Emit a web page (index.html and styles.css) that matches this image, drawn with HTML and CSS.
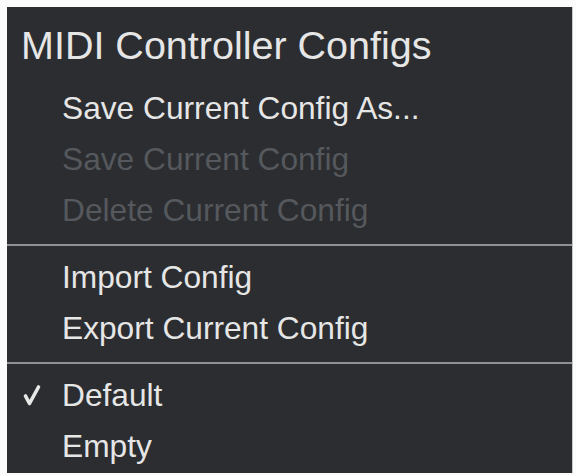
FILE: index.html
```html
<!DOCTYPE html>
<html>
<head>
<meta charset="utf-8">
<link rel="stylesheet" href="styles.css">
</head>
<body>
<div class="menu">
  <div class="title">MIDI Controller Configs</div>
  <div class="item">Save Current Config As...</div>
  <div class="item disabled">Save Current Config</div>
  <div class="item disabled">Delete Current Config</div>
  <div class="sep"></div>
  <div class="item">Import Config</div>
  <div class="item">Export Current Config</div>
  <div class="sep"></div>
  <div class="item checked"><svg class="check" width="18" height="22" viewBox="0 0 18 22"><path d="M2.5 12 L6.5 19.5 L15.5 3" fill="none" stroke="#e8e8e8" stroke-width="3.6" stroke-linecap="round" stroke-linejoin="round"/></svg>Default</div>
  <div class="item">Empty</div>
</div>
</body>
</html>
```
FILE: styles.css
```css
html, body {
  margin: 0;
  padding: 0;
  background: #fbfbfb;
}
body {
  padding: 7px 3px 0 7px;
  height: 475px;
  box-sizing: border-box;
  overflow: hidden;
}
.menu {
  background: #2b2d30;
  height: 466px;
  box-sizing: border-box;
  padding-top: 15px;
  font-family: "Liberation Sans", Arial, sans-serif;
  color: #e6e6e6;
  border-right: 1px solid #c9c9c9;
}
.title {
  font-size: 39.5px;
  line-height: 46px;
  padding-left: 14px;
  margin-bottom: 15px;
}
.item {
  position: relative;
  font-size: 31.7px;
  line-height: 51px;
  padding-left: 55px;
  white-space: nowrap;
}
.item.disabled {
  color: #55585c;
}
.check {
  position: absolute;
  left: 16px;
  top: 14px;
}
.sep {
  height: 2px;
  background: #8f9194;
  margin: 8px 0 6px;
}
```
